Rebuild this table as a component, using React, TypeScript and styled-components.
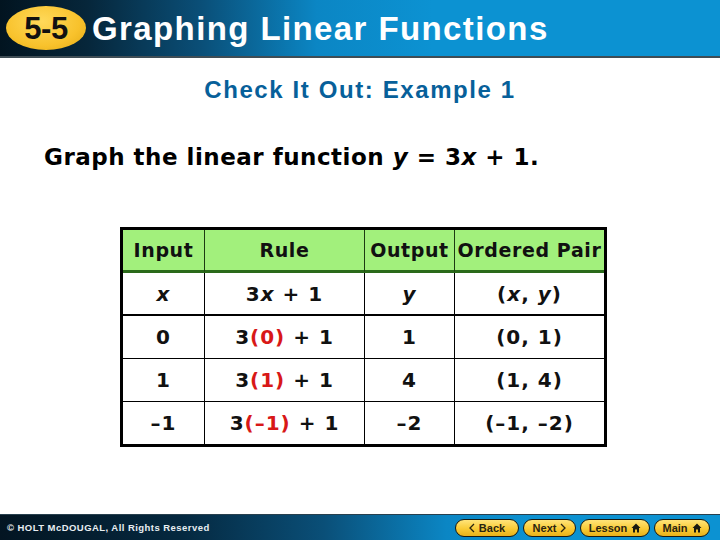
import React from "react";
import styled, { createGlobalStyle } from "styled-components";

const Global = createGlobalStyle`
  html, body { margin: 0; padding: 0; background: #ffffff; }
  body { width: 720px; height: 540px; overflow: hidden; }
`;

const Page = styled.div`
  width: 720px;
  height: 540px;
  display: flex;
  flex-direction: column;
  background: #ffffff;
  font-family: "Liberation Sans", Arial, sans-serif;
`;

const TopBar = styled.header`
  height: 56px;
  flex: none;
  display: flex;
  align-items: center;
  gap: 6px;
  padding-left: 6px;
  background: linear-gradient(90deg, #021420 0%, #06263a 12%, #0a4f78 28%, #0b86c4 44%, #0c92d2 60%, #0c92d2 100%);
  border-bottom: 2px solid #3f4d55;
`;

const Badge = styled.div`
  width: 80px;
  height: 44px;
  border-radius: 50%;
  background: radial-gradient(ellipse at 45% 35%, #ffd95a 0%, #f8c22c 60%, #e2a812 100%);
  display: flex;
  align-items: center;
  justify-content: center;
  font-family: "Liberation Sans", Arial, sans-serif;
  font-weight: 700;
  font-size: 31px;
  color: #111111;
  letter-spacing: -0.5px;
  padding-top: 1px;
  box-sizing: border-box;
`;

const Title = styled.h1`
  margin: 0;
  color: #ffffff;
  font-family: "Liberation Sans", Arial, sans-serif;
  font-weight: 700;
  font-size: 33px;
  letter-spacing: 1.4px;
  padding-top: 2px;
`;

const Main = styled.main`
  flex: 1;
  display: flex;
  flex-direction: column;
`;

const Subtitle = styled.h2`
  margin: 18px 0 0 0;
  text-align: center;
  color: #07609a;
  font-family: "Liberation Sans", Arial, sans-serif;
  font-weight: 700;
  font-size: 24px;
  letter-spacing: 1.6px;
  line-height: 28px;
`;

const Prompt = styled.p`
  margin: 39px 0 0 44px;
  font-family: "DejaVu Sans", Verdana, sans-serif;
  font-weight: 700;
  font-size: 23px;
  letter-spacing: 0.5px;
  line-height: 28px;
  color: #000000;
`;

const Ital = styled.i`
  font-style: italic;
`;

const TableWrap = styled.div`
  margin: 56px 0 0 120px;
  width: 487px;
  border: 3px solid #000000;
  box-sizing: border-box;
`;

const Grid = styled.div`
  display: grid;
  grid-template-columns: 82px 160px 90px 149px;
`;

const HeadCell = styled.div<{ $last?: boolean }>`
  height: 40px;
  background: #a2f07c;
  border-right: ${(p) => (p.$last ? "none" : "1px solid #1c3a12")};
  border-bottom: 3px solid #2a6a1a;
  display: flex;
  align-items: center;
  justify-content: center;
  font-family: "DejaVu Sans", Verdana, sans-serif;
  font-weight: 700;
  font-size: 19px;
  color: #111111;
  white-space: nowrap;
  letter-spacing: 0.6px;
`;

const Cell = styled.div<{ $last?: boolean; $bottom?: boolean; $thick?: boolean }>`
  height: ${(p) => (p.$thick ? "41px" : "42px")};
  background: #ffffff;
  border-right: ${(p) => (p.$last ? "none" : "1px solid #000000")};
  border-bottom: ${(p) => (p.$bottom ? "none" : p.$thick ? "2px solid #000000" : "1px solid #000000")};
  display: flex;
  align-items: center;
  justify-content: center;
  font-family: "DejaVu Sans", Verdana, sans-serif;
  font-weight: 700;
  font-size: 20px;
  color: #111111;
  white-space: pre;
  letter-spacing: 1px;
`;

const Red = styled.span`
  color: #d81818;
`;

const Footer = styled.footer`
  height: 25px;
  flex: none;
  display: flex;
  align-items: center;
  justify-content: space-between;
  padding: 0 10px 0 7px;
  background: linear-gradient(90deg, #031522 0%, #05283f 25%, #0a4f78 45%, #0b86c4 62%, #0c92d2 75%, #0c92d2 100%);
  border-top: 1px solid #28404e;
`;

const Copy = styled.span`
  color: #e8eef2;
  font-family: "Liberation Sans", Arial, sans-serif;
  font-weight: 700;
  font-size: 9.5px;
  letter-spacing: 0.45px;
`;

const NavRow = styled.nav`
  display: flex;
  gap: 4px;
  align-items: center;
`;

const NavButton = styled.div<{ $w: number }>`
  width: ${(p) => p.$w}px;
  height: 18px;
  box-sizing: border-box;
  border: 1.5px solid #1a1a10;
  border-radius: 9px;
  background: linear-gradient(180deg, #ffe47a 0%, #f9cb35 55%, #e9b11a 100%);
  display: flex;
  align-items: center;
  justify-content: center;
  gap: 4px;
  font-family: "Liberation Sans", Arial, sans-serif;
  font-weight: 700;
  font-size: 11px;
  color: #2a2410;
`;

const Chevron = ({ dir }: { dir: "l" | "r" }) => (
  <svg width="6" height="10" viewBox="0 0 6 10">
    <path
      d={dir === "l" ? "M5 1 L1 5 L5 9" : "M1 1 L5 5 L1 9"}
      fill="none"
      stroke="#2a2410"
      strokeWidth="1.3"
    />
  </svg>
);

const House = () => (
  <svg width="10" height="10" viewBox="0 0 10 10">
    <path d="M5 0.5 L0.5 5 L2 5 L2 9.5 L4 9.5 L4 6.5 L6 6.5 L6 9.5 L8 9.5 L8 5 L9.5 5 Z" fill="#1a1a10" />
  </svg>
);

type Row = { input: string; val: string; out: string; pair: string };

const rows: Row[] = [
  { input: "0", val: "(0)", out: "1", pair: "(0, 1)" },
  { input: "1", val: "(1)", out: "4", pair: "(1, 4)" },
  { input: "–1", val: "(–1)", out: "–2", pair: "(–1, –2)" },
];

export default function App() {
  return (
    <Page>
      <Global />
      <TopBar>
        <Badge>5-5</Badge>
        <Title>Graphing Linear Functions</Title>
      </TopBar>
      <Main>
        <Subtitle>Check It Out: Example 1</Subtitle>
        <Prompt>
          {"Graph the linear function "}
          <Ital>y</Ital>
          {" = 3"}
          <Ital>x</Ital>
          {" + 1."}
        </Prompt>
        <TableWrap>
          <Grid>
            <HeadCell>Input</HeadCell>
            <HeadCell>Rule</HeadCell>
            <HeadCell>Output</HeadCell>
            <HeadCell $last>Ordered Pair</HeadCell>
            <Cell $thick>
              <Ital>x</Ital>
            </Cell>
            <Cell $thick>
              {"3"}
              <Ital>x</Ital>
              {" + 1"}
            </Cell>
            <Cell $thick>
              <Ital>y</Ital>
            </Cell>
            <Cell $thick $last>
              {"("}
              <Ital>x</Ital>
              {", "}
              <Ital>y</Ital>
              {")"}
            </Cell>
            {rows.map((r, i) => {
              const bottom = i === rows.length - 1;
              return (
                <React.Fragment key={i}>
                  <Cell $bottom={bottom}>{r.input}</Cell>
                  <Cell $bottom={bottom}>
                    {"3"}
                    <Red>{r.val}</Red>
                    {" + 1"}
                  </Cell>
                  <Cell $bottom={bottom}>{r.out}</Cell>
                  <Cell $bottom={bottom} $last>
                    {r.pair}
                  </Cell>
                </React.Fragment>
              );
            })}
          </Grid>
        </TableWrap>
      </Main>
      <Footer>
        <Copy>© HOLT McDOUGAL, All Rights Reserved</Copy>
        <NavRow>
          <NavButton $w={64}>
            <Chevron dir="l" />
            Back
          </NavButton>
          <NavButton $w={53}>
            Next
            <Chevron dir="r" />
          </NavButton>
          <NavButton $w={70}>
            Lesson
            <House />
          </NavButton>
          <NavButton $w={56}>
            Main
            <House />
          </NavButton>
        </NavRow>
      </Footer>
    </Page>
  );
}
